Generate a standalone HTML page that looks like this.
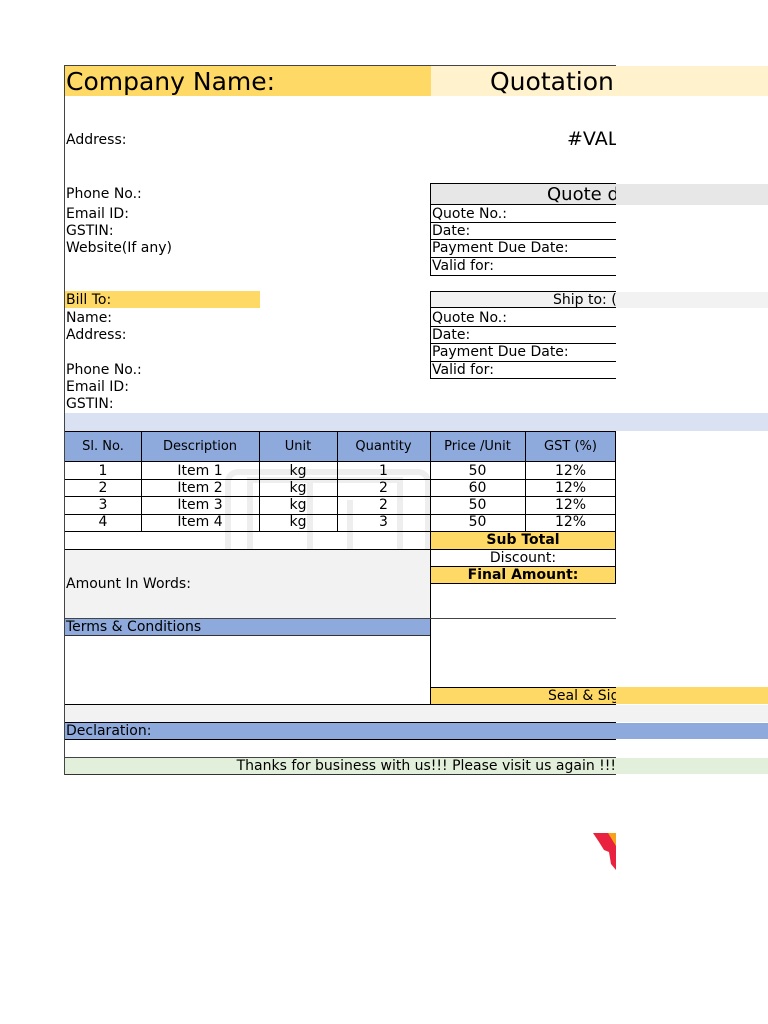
<!DOCTYPE html>
<html><head><meta charset="utf-8"><style>
*{margin:0;padding:0;box-sizing:border-box}
body{width:768px;height:1024px;background:#fff;position:relative;overflow:hidden;font-family:"DejaVu Sans","Liberation Sans",sans-serif;font-size:14px;color:#000}
.a{position:absolute;white-space:nowrap}
.t{position:absolute;white-space:nowrap;line-height:1}
.clip{position:absolute;left:0;top:0;width:616px;height:1024px;overflow:hidden}
.c{text-align:center}
</style></head><body>
<div class="a" style="left:431px;top:66px;width:337px;height:30px;background:#FFF2CC"></div>
<div class="a" style="left:616px;top:184px;width:152px;height:21px;background:#E7E7E7"></div>
<div class="a" style="left:616px;top:292px;width:152px;height:16px;background:#F2F2F2"></div>
<div class="a" style="left:65px;top:413px;width:703px;height:18px;background:#D9E1F2"></div>
<div class="a" style="left:616px;top:687px;width:152px;height:17px;background:#FFD966"></div>
<div class="a" style="left:616px;top:705px;width:152px;height:17px;background:#F2F2F2"></div>
<div class="a" style="left:616px;top:723px;width:152px;height:16px;background:#8EA9DB"></div>
<div class="a" style="left:616px;top:758px;width:152px;height:16px;background:#E2EFDA"></div>

<div class="clip">
<div class="a" style="left:65px;top:65px;width:551px;height:1px;background:#444"></div>
<div class="a" style="left:64px;top:65px;width:1px;height:710px;background:#444"></div>
<div class="a" style="left:65px;top:66px;width:366px;height:30px;background:#FFD966"></div>
<div class="t" style="left:66px;top:69px;font-size:25px">Company Name:</div>
<div class="t" style="left:490px;top:69px;font-size:25px">Quotation</div>
<div class="t" style="left:66px;top:133px">Address:</div>
<div class="t" style="left:567px;top:130px;font-size:19px">#VALUE!</div>
<div class="t" style="left:66px;top:187px">Phone No.:</div>
<div class="t" style="left:66px;top:207px">Email ID:</div>
<div class="t" style="left:66px;top:224px">GSTIN:</div>
<div class="t" style="left:66px;top:241px">Website(If any)</div>

<div class="a" style="left:430px;top:183px;width:200px;height:93px;border:1px solid #000;border-right:none"></div>
<div class="a" style="left:431px;top:184px;width:200px;height:21px;background:#E7E7E7;border-bottom:1px solid #000"></div>
<div class="t" style="left:547px;top:186px;font-size:18px">Quote details</div>
<div class="a" style="left:431px;top:222px;width:200px;height:1px;background:#000"></div>
<div class="a" style="left:431px;top:239px;width:200px;height:1px;background:#000"></div>
<div class="a" style="left:431px;top:257px;width:200px;height:1px;background:#000"></div>
<div class="t" style="left:432px;top:207px">Quote No.:</div>
<div class="t" style="left:432px;top:224px">Date:</div>
<div class="t" style="left:432px;top:241px">Payment Due Date:</div>
<div class="t" style="left:432px;top:259px">Valid for:</div>

<div class="a" style="left:65px;top:291px;width:195px;height:17px;background:#FFD966"></div>
<div class="t" style="left:66px;top:293px">Bill To:</div>
<div class="t" style="left:66px;top:311px">Name:</div>
<div class="t" style="left:66px;top:328px">Address:</div>
<div class="t" style="left:66px;top:363px">Phone No.:</div>
<div class="t" style="left:66px;top:380px">Email ID:</div>
<div class="t" style="left:66px;top:397px">GSTIN:</div>

<div class="a" style="left:430px;top:291px;width:200px;height:88px;border:1px solid #000;border-right:none"></div>
<div class="a" style="left:431px;top:292px;width:200px;height:16px;background:#F2F2F2;border-bottom:1px solid #000"></div>
<div class="t" style="left:553px;top:293px">Ship to: (if different)</div>
<div class="a" style="left:431px;top:326px;width:200px;height:1px;background:#000"></div>
<div class="a" style="left:431px;top:343px;width:200px;height:1px;background:#000"></div>
<div class="a" style="left:431px;top:361px;width:200px;height:1px;background:#000"></div>
<div class="t" style="left:432px;top:311px">Quote No.:</div>
<div class="t" style="left:432px;top:328px">Date:</div>
<div class="t" style="left:432px;top:345px">Payment Due Date:</div>
<div class="t" style="left:432px;top:363px">Valid for:</div>

<svg class="a" style="left:220px;top:460px" width="230" height="160" viewBox="0 0 230 160"><g fill="none" stroke="#eee" stroke-width="6"><rect x="8" y="12" width="200" height="140" rx="10"/><rect x="30" y="20" width="150" height="90"/><line x1="90" y1="20" x2="90" y2="110"/><line x1="130" y1="40" x2="130" y2="110"/></g></svg>

<div class="a" style="left:65px;top:431px;width:551px;height:31px;background:#8EA9DB;border-top:1px solid #000;border-bottom:1px solid #000"></div>
<div class="t c" style="left:65px;top:440px;width:76px;font-size:13px">Sl. No.</div>
<div class="t c" style="left:141px;top:440px;width:118px;font-size:13px">Description</div>
<div class="t c" style="left:259px;top:440px;width:78px;font-size:13px">Unit</div>
<div class="t c" style="left:337px;top:440px;width:93px;font-size:13px">Quantity</div>
<div class="t c" style="left:430px;top:440px;width:95px;font-size:13px">Price /Unit</div>
<div class="t c" style="left:525px;top:440px;width:91px;font-size:13px">GST (%)</div>
<div class="a" style="left:141px;top:431px;width:1px;height:100px;background:#000"></div>
<div class="a" style="left:259px;top:431px;width:1px;height:100px;background:#000"></div>
<div class="a" style="left:337px;top:431px;width:1px;height:100px;background:#000"></div>
<div class="a" style="left:430px;top:431px;width:1px;height:273px;background:#000"></div>
<div class="a" style="left:525px;top:431px;width:1px;height:100px;background:#000"></div>
<div class="a" style="left:615px;top:431px;width:1px;height:153px;background:#000"></div>
<div class="a" style="left:65px;top:479px;width:551px;height:1px;background:#000"></div>
<div class="a" style="left:65px;top:496px;width:551px;height:1px;background:#000"></div>
<div class="a" style="left:65px;top:514px;width:551px;height:1px;background:#000"></div>
<div class="a" style="left:65px;top:531px;width:551px;height:1px;background:#000"></div>

<div class="t c" style="left:65px;top:464px;width:76px">1</div><div class="t c" style="left:141px;top:464px;width:118px">Item 1</div><div class="t c" style="left:259px;top:464px;width:78px">kg</div><div class="t c" style="left:337px;top:464px;width:93px">1</div><div class="t c" style="left:430px;top:464px;width:95px">50</div><div class="t c" style="left:525px;top:464px;width:91px">12%</div>
<div class="t c" style="left:65px;top:481px;width:76px">2</div><div class="t c" style="left:141px;top:481px;width:118px">Item 2</div><div class="t c" style="left:259px;top:481px;width:78px">kg</div><div class="t c" style="left:337px;top:481px;width:93px">2</div><div class="t c" style="left:430px;top:481px;width:95px">60</div><div class="t c" style="left:525px;top:481px;width:91px">12%</div>
<div class="t c" style="left:65px;top:498px;width:76px">3</div><div class="t c" style="left:141px;top:498px;width:118px">Item 3</div><div class="t c" style="left:259px;top:498px;width:78px">kg</div><div class="t c" style="left:337px;top:498px;width:93px">2</div><div class="t c" style="left:430px;top:498px;width:95px">50</div><div class="t c" style="left:525px;top:498px;width:91px">12%</div>
<div class="t c" style="left:65px;top:515px;width:76px">4</div><div class="t c" style="left:141px;top:515px;width:118px">Item 4</div><div class="t c" style="left:259px;top:515px;width:78px">kg</div><div class="t c" style="left:337px;top:515px;width:93px">3</div><div class="t c" style="left:430px;top:515px;width:95px">50</div><div class="t c" style="left:525px;top:515px;width:91px">12%</div>

<div class="a" style="left:431px;top:532px;width:184px;height:17px;background:#FFD966"></div>
<div class="t c" style="left:430px;top:533px;width:186px;font-weight:bold">Sub Total</div>
<div class="a" style="left:65px;top:549px;width:551px;height:1px;background:#000"></div>
<div class="a" style="left:65px;top:550px;width:365px;height:68px;background:#F2F2F2"></div>
<div class="t c" style="left:430px;top:551px;width:186px">Discount:</div>
<div class="a" style="left:430px;top:566px;width:186px;height:1px;background:#000"></div>
<div class="a" style="left:431px;top:567px;width:184px;height:16px;background:#FFD966"></div>
<div class="t c" style="left:430px;top:568px;width:186px;font-weight:bold">Final Amount:</div>
<div class="a" style="left:430px;top:583px;width:186px;height:1px;background:#000"></div>
<div class="t" style="left:66px;top:577px">Amount In Words:</div>
<div class="a" style="left:65px;top:618px;width:551px;height:1px;background:#444"></div>
<div class="a" style="left:65px;top:619px;width:365px;height:17px;background:#8EA9DB;border-bottom:1px solid #333"></div>
<div class="t" style="left:66px;top:620px">Terms &amp; Conditions</div>
<div class="a" style="left:430px;top:687px;width:186px;height:1px;background:#000"></div>
<div class="a" style="left:431px;top:688px;width:185px;height:16px;background:#FFD966"></div>
<div class="t" style="left:548px;top:689px">Seal &amp; Signature</div>
<div class="a" style="left:65px;top:704px;width:551px;height:1px;background:#000"></div>
<div class="a" style="left:65px;top:705px;width:551px;height:17px;background:#F2F2F2"></div>
<div class="a" style="left:65px;top:722px;width:551px;height:1px;background:#000"></div>
<div class="a" style="left:65px;top:723px;width:551px;height:16px;background:#8EA9DB"></div>
<div class="t" style="left:66px;top:724px">Declaration:</div>
<div class="a" style="left:65px;top:739px;width:551px;height:1px;background:#000"></div>
<div class="a" style="left:65px;top:757px;width:551px;height:1px;background:#444"></div>
<div class="a" style="left:65px;top:758px;width:551px;height:16px;background:#E2EFDA"></div>
<div class="t" style="left:65px;top:759px;width:551px;text-align:right">Thanks for business with us!!! Please visit us again !!!</div>
<div class="a" style="left:65px;top:774px;width:551px;height:1px;background:#333"></div>

<svg class="a" style="left:592px;top:832px" width="30" height="40" viewBox="0 0 30 40"><path d="M1 1 H24 V38 L19 32 L17 20 L12 18 L7 10 Z" fill="#E8223F"/><path d="M16 1 H24 V14 Z" fill="#F7A21B"/></svg>
</div>
</body></html>
